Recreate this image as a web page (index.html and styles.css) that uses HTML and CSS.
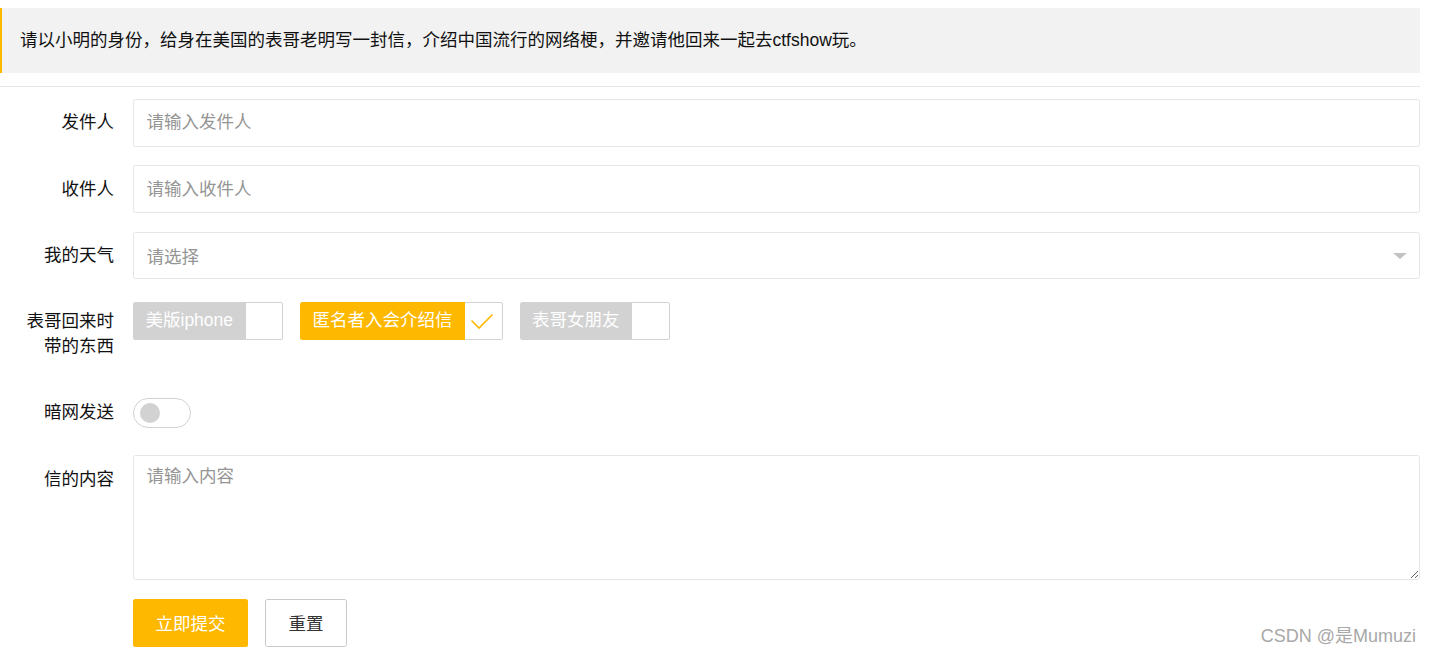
FILE: index.html
```html
<!DOCTYPE html>
<html lang="zh-CN">
<head>
<meta charset="utf-8">
<title>写信</title>
<link rel="stylesheet" href="styles.css">
</head>
<body>
<div class="page">
  <div class="quote">请以小明的身份，给身在美国的表哥老明写一封信，介绍中国流行的网络梗，并邀请他回来一起去ctfshow玩。</div>
  <hr class="line">
  <form class="form">
    <div class="item">
      <label class="label">发件人</label>
      <div class="block"><input class="input" type="text" placeholder="请输入发件人"></div>
    </div>
    <div class="item">
      <label class="label">收件人</label>
      <div class="block"><input class="input" type="text" placeholder="请输入收件人"></div>
    </div>
    <div class="item">
      <label class="label">我的天气</label>
      <div class="block">
        <div class="select"><span class="select-text">请选择</span><i class="caret"></i></div>
      </div>
    </div>
    <div class="item">
      <label class="label">表哥回来时带的东西</label>
      <div class="block checks">
        <div class="checkbox"><span>美版iphone</span><i></i></div>
        <div class="checkbox checked"><span>匿名者入会介绍信</span><i><svg width="24" height="18" viewBox="0 0 24 18"><polyline points="1.5,7.5 9,15 22.5,1.5" fill="none" stroke="#FFB800" stroke-width="1.6"/></svg></i></div>
        <div class="checkbox"><span>表哥女朋友</span><i></i></div>
      </div>
    </div>
    <div class="item">
      <label class="label">暗网发送</label>
      <div class="block"><div class="switch"><i class="knob"></i></div></div>
    </div>
    <div class="item">
      <label class="label">信的内容</label>
      <div class="block"><textarea class="textarea" placeholder="请输入内容"></textarea></div>
    </div>
    <div class="item">
      <div class="label-space"></div>
      <div class="block buttons">
        <button type="button" class="btn primary">立即提交</button>
        <button type="button" class="btn plain">重置</button>
      </div>
    </div>
  </form>
  <div class="watermark">CSDN @是Mumuzi</div>
</div>
</body>
</html>
```
FILE: styles.css
```css
* { box-sizing: border-box; }
html, body { margin: 0; padding: 0; background: #fff; }
body {
  font-family: "Liberation Sans", "Noto Sans CJK SC", sans-serif;
  font-size: 17.5px;
  color: #222;
}
.page {
  padding: 8px 10px 0 0;
  height: 656px;
  position: relative;
  overflow: hidden;
}
.quote {
  background: #f2f2f2;
  border-left: 2px solid #FFB800;
  padding: 18.75px 18px;
  line-height: 27.5px;
  height: 65px;
  color: #111;
}
.line {
  border: 0;
  height: 1px;
  background: #e6e6e6;
  margin: 12.5px 0;
}
.form { margin: 0; }
.item {
  display: flex;
  align-items: flex-start;
  margin-bottom: 18.75px;
}
.label {
  width: 114px;
  flex: none;
  text-align: right;
  padding: 11.25px 0 11.25px 20px;
  line-height: 25px;
  color: #111;
}
.label-space { width: 114px; flex: none; }
.block {
  flex: 1;
  margin-left: 19px;
  min-height: 47.5px;
}
.input, .select, .textarea {
  display: block;
  width: 100%;
  border: 1px solid #e6e6e6;
  border-radius: 2.5px;
  background: #fff;
  font: inherit;
  color: #333;
  outline: none;
}
.input {
  height: 47.5px;
  padding: 0 12.5px;
}
.input::placeholder, .textarea::placeholder { color: #959595; }
.select {
  height: 47.5px;
  padding: 0 12.5px;
  display: flex;
  align-items: center;
  justify-content: space-between;
}
.select-text { color: #959595; }
.caret {
  width: 0;
  height: 0;
  border-left: 7px solid transparent;
  border-right: 7px solid transparent;
  border-top: 6.5px solid #c2c2c2;
  margin-right: -0.5px;
  margin-top: 2px;
}
.checks {
  display: flex;
  gap: 17px;
  padding-top: 4.5px;
}
.checkbox {
  display: flex;
  height: 37.5px;
}
.checkbox span {
  background: #d2d2d2;
  color: #fff;
  padding: 0 12.5px;
  line-height: 37.5px;
  border-radius: 2.5px 0 0 2.5px;
  white-space: nowrap;
}
.checkbox i {
  width: 37.5px;
  border: 1px solid #d2d2d2;
  border-left: 0;
  border-radius: 0 2.5px 2.5px 0;
  display: flex;
  align-items: center;
  justify-content: center;
}
.checkbox.checked span { background: #FFB800; }
.checkbox.checked i svg { margin-left: -2px; margin-top: 1px; }
.switch {
  margin-top: 9px;
  width: 58px;
  height: 30px;
  border: 1px solid #d2d2d2;
  border-radius: 20px;
  display: flex;
  align-items: center;
  padding-left: 6px;
}
.knob {
  width: 20px;
  height: 20px;
  border-radius: 50%;
  background: #d2d2d2;
}
.textarea {
  height: 125px;
  padding: 7.5px 12.5px;
  line-height: 25px;
  resize: vertical;
}
.buttons {
  display: flex;
  gap: 17px;
}
.btn {
  height: 47.5px;
  padding: 0 22.5px;
  font: inherit;
  border-radius: 2.5px;
  cursor: pointer;
}
.btn.primary {
  background: #FFB800;
  color: #fff;
  border: 0;
}
.btn.plain {
  background: #fff;
  color: #333;
  border: 1px solid #c9c9c9;
}
.watermark {
  position: absolute;
  right: 14px;
  bottom: 9px;
  font-size: 18px;
  color: #a8a8a8;
  white-space: nowrap;
}
```
